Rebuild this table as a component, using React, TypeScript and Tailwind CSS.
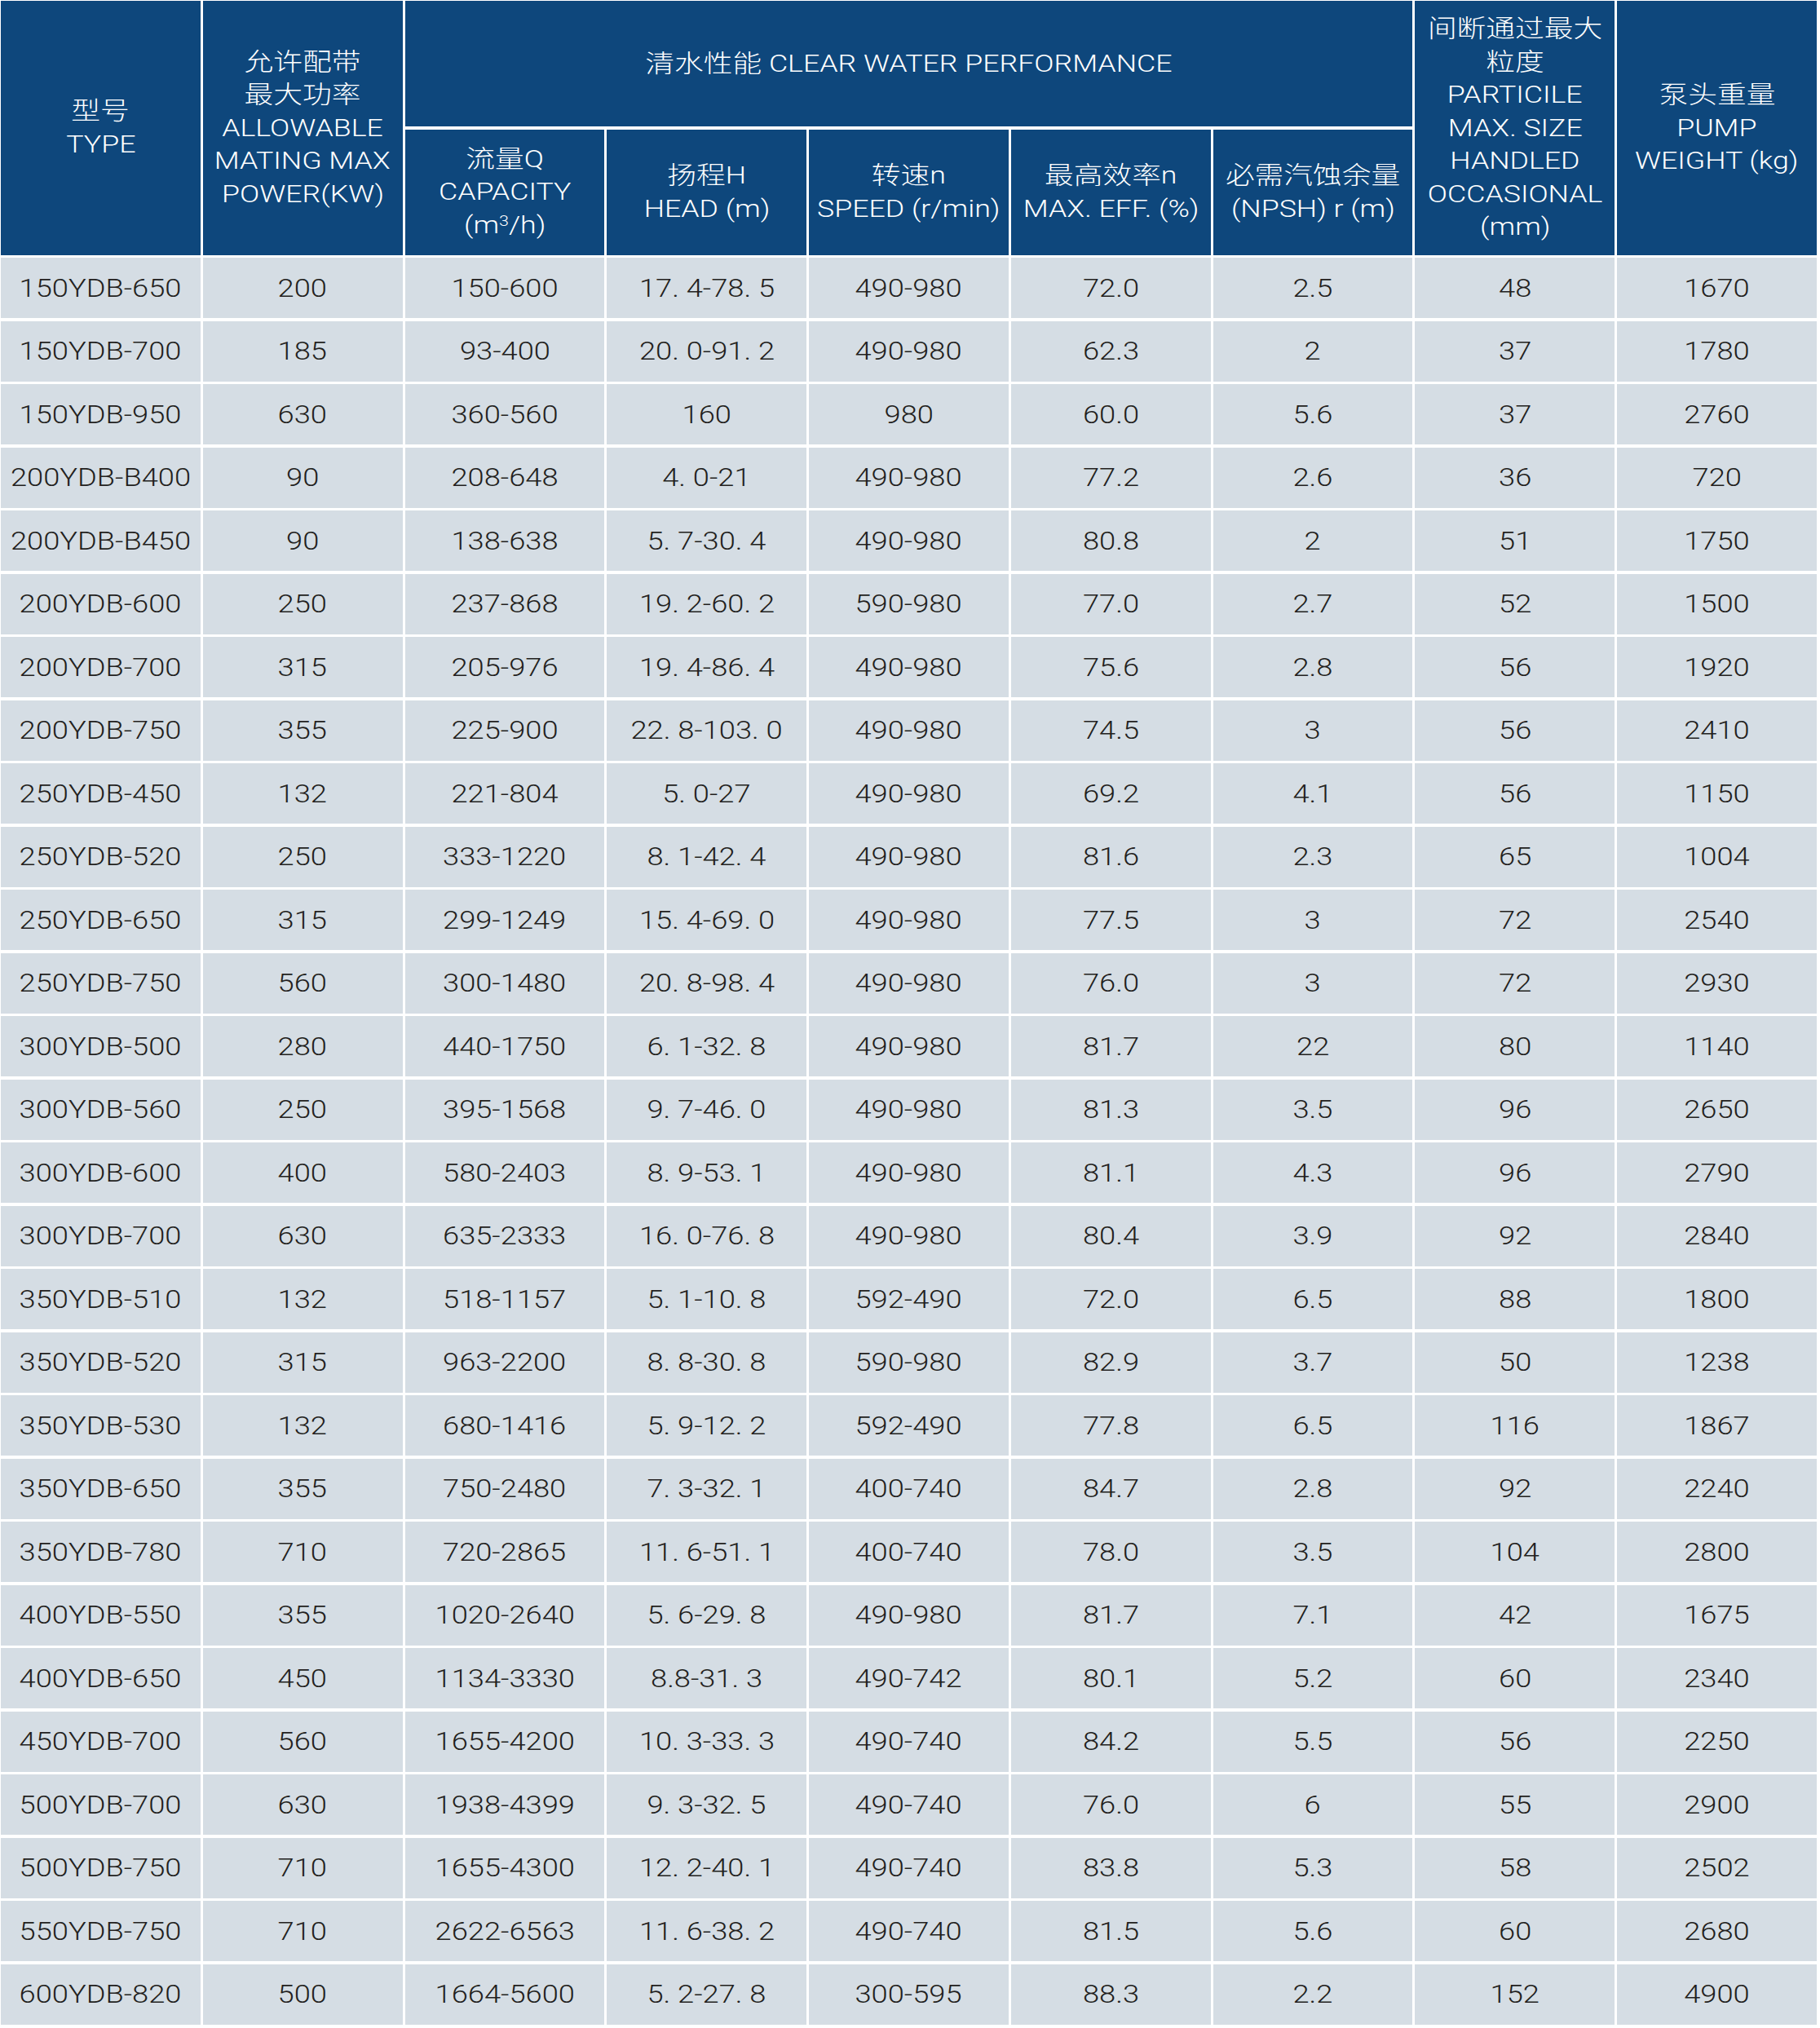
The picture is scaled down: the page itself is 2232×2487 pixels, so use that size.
import React from "react";

const rows: string[][] = [
  ["150YDB-650", "200", "150-600", "17. 4-78. 5", "490-980", "72.0", "2.5", "48", "1670"],
  ["150YDB-700", "185", "93-400", "20. 0-91. 2", "490-980", "62.3", "2", "37", "1780"],
  ["150YDB-950", "630", "360-560", "160", "980", "60.0", "5.6", "37", "2760"],
  ["200YDB-B400", "90", "208-648", "4. 0-21", "490-980", "77.2", "2.6", "36", "720"],
  ["200YDB-B450", "90", "138-638", "5. 7-30. 4", "490-980", "80.8", "2", "51", "1750"],
  ["200YDB-600", "250", "237-868", "19. 2-60. 2", "590-980", "77.0", "2.7", "52", "1500"],
  ["200YDB-700", "315", "205-976", "19. 4-86. 4", "490-980", "75.6", "2.8", "56", "1920"],
  ["200YDB-750", "355", "225-900", "22. 8-103. 0", "490-980", "74.5", "3", "56", "2410"],
  ["250YDB-450", "132", "221-804", "5. 0-27", "490-980", "69.2", "4.1", "56", "1150"],
  ["250YDB-520", "250", "333-1220", "8. 1-42. 4", "490-980", "81.6", "2.3", "65", "1004"],
  ["250YDB-650", "315", "299-1249", "15. 4-69. 0", "490-980", "77.5", "3", "72", "2540"],
  ["250YDB-750", "560", "300-1480", "20. 8-98. 4", "490-980", "76.0", "3", "72", "2930"],
  ["300YDB-500", "280", "440-1750", "6. 1-32. 8", "490-980", "81.7", "22", "80", "1140"],
  ["300YDB-560", "250", "395-1568", "9. 7-46. 0", "490-980", "81.3", "3.5", "96", "2650"],
  ["300YDB-600", "400", "580-2403", "8. 9-53. 1", "490-980", "81.1", "4.3", "96", "2790"],
  ["300YDB-700", "630", "635-2333", "16. 0-76. 8", "490-980", "80.4", "3.9", "92", "2840"],
  ["350YDB-510", "132", "518-1157", "5. 1-10. 8", "592-490", "72.0", "6.5", "88", "1800"],
  ["350YDB-520", "315", "963-2200", "8. 8-30. 8", "590-980", "82.9", "3.7", "50", "1238"],
  ["350YDB-530", "132", "680-1416", "5. 9-12. 2", "592-490", "77.8", "6.5", "116", "1867"],
  ["350YDB-650", "355", "750-2480", "7. 3-32. 1", "400-740", "84.7", "2.8", "92", "2240"],
  ["350YDB-780", "710", "720-2865", "11. 6-51. 1", "400-740", "78.0", "3.5", "104", "2800"],
  ["400YDB-550", "355", "1020-2640", "5. 6-29. 8", "490-980", "81.7", "7.1", "42", "1675"],
  ["400YDB-650", "450", "1134-3330", "8.8-31. 3", "490-742", "80.1", "5.2", "60", "2340"],
  ["450YDB-700", "560", "1655-4200", "10. 3-33. 3", "490-740", "84.2", "5.5", "56", "2250"],
  ["500YDB-700", "630", "1938-4399", "9. 3-32. 5", "490-740", "76.0", "6", "55", "2900"],
  ["500YDB-750", "710", "1655-4300", "12. 2-40. 1", "490-740", "83.8", "5.3", "58", "2502"],
  ["550YDB-750", "710", "2622-6563", "11. 6-38. 2", "490-740", "81.5", "5.6", "60", "2680"],
  ["600YDB-820", "500", "1664-5600", "5. 2-27. 8", "300-595", "88.3", "2.2", "152", "4900"],
];

function Head({ lines, className = "" }: { lines: React.ReactNode[]; className?: string }) {
  return (
    <div
      className={`flex flex-col items-center justify-center bg-[#0e477c] text-white text-[30px] font-light leading-[40.5px] font-['Roboto','Noto_Sans_CJK_SC',sans-serif] ${className}`}
    >
      {lines.map((l, i) => (
        <span key={i} className="whitespace-nowrap scale-x-[1.19]">
          {l}
        </span>
      ))}
    </div>
  );
}

export default function App() {
  return (
    <div className="w-[2232px] bg-white pl-[1px] pr-[4px] pt-[1px] pb-[5px]">
      <div className="grid grid-cols-9 gap-x-[3px] gap-y-[3.5px] grid-rows-[154px_154px_repeat(28,74px)]">
        <Head className="row-span-2" lines={["型号", "TYPE"]} />
        <Head
          className="row-span-2"
          lines={["允许配带", "最大功率", "ALLOWABLE", "MATING MAX", "POWER(KW)"]}
        />
        <Head className="col-span-5" lines={["清水性能 CLEAR WATER PERFORMANCE"]} />
        <Head
          className="row-span-2"
          lines={["间断通过最大", "粒度", "PARTICILE", "MAX. SIZE", "HANDLED", "OCCASIONAL", "(mm)"]}
        />
        <Head className="row-span-2" lines={["泵头重量", "PUMP", "WEIGHT (kg)"]} />
        <Head
          lines={[
            "流量Q",
            "CAPACITY",
            <>
              (m<sup className="text-[18px]">3</sup>/h)
            </>,
          ]}
        />
        <Head lines={["扬程H", "HEAD (m)"]} />
        <Head lines={["转速n", "SPEED (r/min)"]} />
        <Head lines={["最高效率n", "MAX. EFF. (%)"]} />
        <Head lines={["必需汽蚀余量", "(NPSH) r (m)"]} />
        {rows.map((r, ri) =>
          r.map((c, ci) => (
            <div
              key={`${ri}-${ci}`}
              className="flex items-center justify-center bg-[#d5dde4] text-[#231f20] text-[31px] font-light leading-none font-['Roboto','Liberation_Sans',sans-serif]"
            >
              <span className="whitespace-nowrap scale-x-[1.17]">{c}</span>
            </div>
          ))
        )}
      </div>
    </div>
  );
}
